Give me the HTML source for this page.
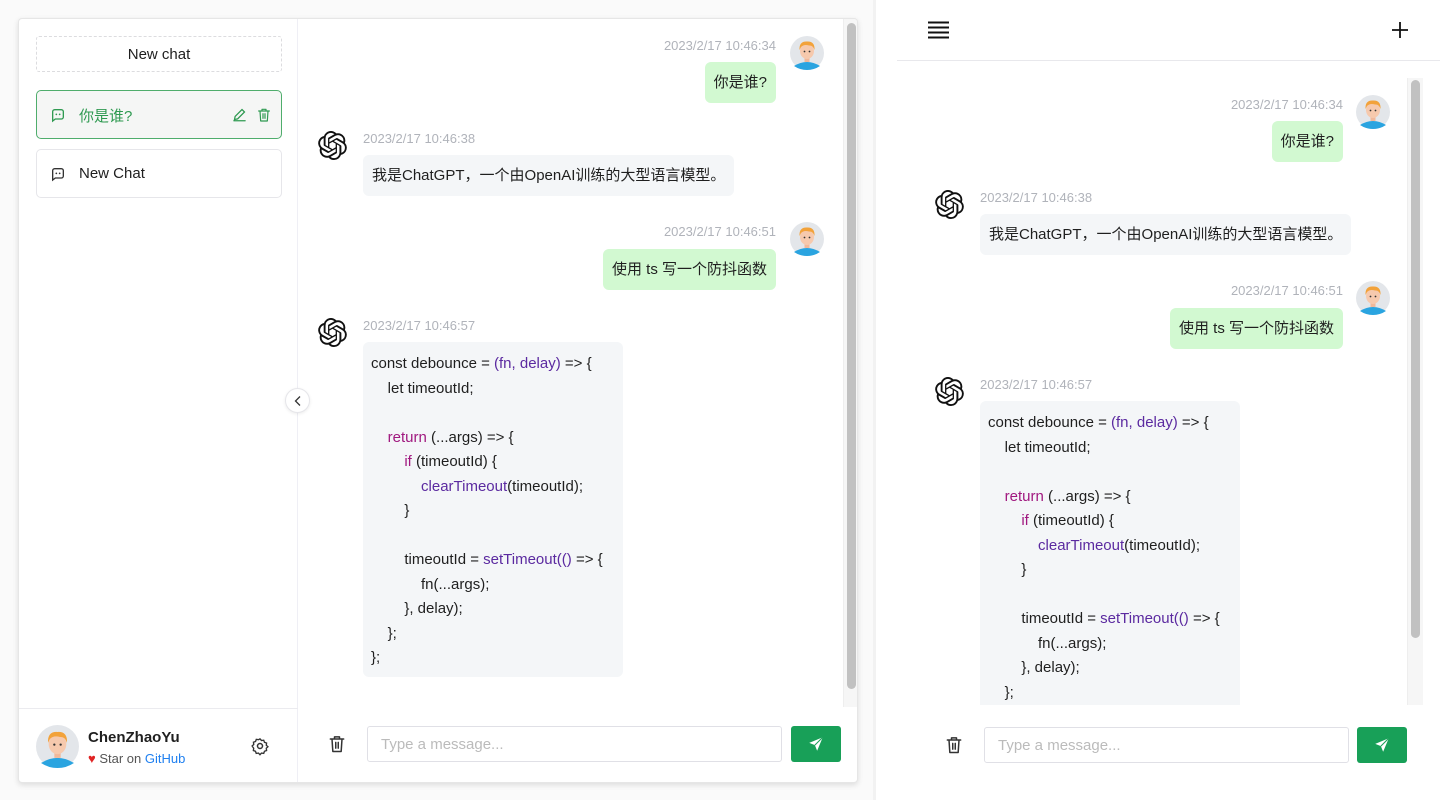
<!DOCTYPE html>
<html><head><meta charset="utf-8"><style>
*{box-sizing:border-box;margin:0;padding:0}
body{width:1440px;height:800px;overflow:hidden;background:#fafafa;font-family:"Liberation Sans","Noto Sans CJK SC",sans-serif;color:#1f1f1f;position:relative}
.abs{position:absolute}
.card{left:18px;top:18px;width:840px;height:765px;background:#fff;border:1px solid #e6e6e6;border-radius:4px;box-shadow:0 2px 6px rgba(0,0,0,.12);overflow:hidden}
.ts{font-size:13px;color:#b0b3ba;white-space:nowrap}
.bub{font-size:15px;border-radius:6px;padding:0 9px;line-height:41px;white-space:nowrap}
.u{background:#d2f9d1}
.b{background:#f4f6f8}
.code{background:#f4f6f8;border-radius:6px;padding:10px 8px;font-size:15px;line-height:24.5px;white-space:pre;overflow:hidden}
.p{color:#5b2aa0}.k{color:#a0187f}.f{color:#5b2aa0}
.btn{background:#18a058;border-radius:3px;width:50px;height:36px;display:flex;align-items:center;justify-content:center}
.inp{border:1px solid #e0e0e6;border-radius:3px;height:36px;font-size:15px;color:#bbb;padding-left:13px;line-height:36px;background:#fff}
</style></head><body>
<svg width="0" height="0" style="position:absolute">
<defs>
<symbol id="av" viewBox="0 0 34 34">
<circle cx="17" cy="17" r="17" fill="#e3e6ea"/>
<path d="M4 30 Q17 22 30 30 Q24 34 17 34 Q10 34 4 30Z" fill="#2aa4e0"/>
<rect x="14.5" y="20" width="5" height="6" fill="#f0b89a"/>
<ellipse cx="17" cy="15" rx="7" ry="8" fill="#f6c9ad"/>
<path d="M9.5 14 Q9 5 17 5.5 Q25 5 24.5 14 Q23 9 19 9.5 Q14 8 11 11Z" fill="#f2a23a"/>
<circle cx="14.5" cy="15.5" r=".9" fill="#333"/><circle cx="19.5" cy="15.5" r=".9" fill="#333"/>
</symbol>
<symbol id="oai" viewBox="0 0 24 24"><path fill="#111" d="M22.2819 9.8211a5.9847 5.9847 0 0 0-.5157-4.9108 6.0462 6.0462 0 0 0-6.5098-2.9A6.0651 6.0651 0 0 0 4.9807 4.1818a5.9847 5.9847 0 0 0-3.9977 2.9 6.0462 6.0462 0 0 0 .7427 7.0966 5.98 5.98 0 0 0 .511 4.9107 6.051 6.051 0 0 0 6.5146 2.9001A5.9847 5.9847 0 0 0 13.2599 24a6.0557 6.0557 0 0 0 5.7718-4.2058 5.9894 5.9894 0 0 0 3.9977-2.9001 6.0557 6.0557 0 0 0-.7475-7.0729zm-9.022 12.6081a4.4755 4.4755 0 0 1-2.8764-1.0408l.1419-.0804 4.7783-2.7582a.7948.7948 0 0 0 .3927-.6813v-6.7369l2.02 1.1686a.071.071 0 0 1 .038.052v5.5826a4.504 4.504 0 0 1-4.4945 4.4944zm-9.6607-4.1254a4.4708 4.4708 0 0 1-.5346-3.0137l.142.0852 4.783 2.7582a.7712.7712 0 0 0 .7806 0l5.8428-3.3685v2.3324a.0804.0804 0 0 1-.0332.0615L9.74 19.9502a4.4992 4.4992 0 0 1-6.1408-1.6464zM2.3408 7.8956a4.485 4.485 0 0 1 2.3655-1.9728V11.6a.7664.7664 0 0 0 .3879.6765l5.8144 3.3543-2.0201 1.1685a.0757.0757 0 0 1-.071 0l-4.8303-2.7865A4.504 4.504 0 0 1 2.3408 7.872zm16.5963 3.8558L13.1038 8.364 15.1192 7.2a.0757.0757 0 0 1 .071 0l4.8303 2.7913a4.4944 4.4944 0 0 1-.6765 8.1042v-5.6772a.79.79 0 0 0-.407-.667zm2.0107-3.0231l-.142-.0852-4.7735-2.7818a.7759.7759 0 0 0-.7854 0L9.409 9.2297V6.8974a.0662.0662 0 0 1 .0284-.0615l4.8303-2.7866a4.4992 4.4992 0 0 1 6.6802 4.66zM8.3065 12.863l-2.02-1.1638a.0804.0804 0 0 1-.038-.0567V6.0742a4.4992 4.4992 0 0 1 7.3757-3.4537l-.142.0805L8.704 5.459a.7948.7948 0 0 0-.3927.6813zm1.0976-2.3654l2.602-1.4998 2.6069 1.4998v2.9994l-2.5974 1.4997-2.6067-1.4997Z"/></symbol>
<symbol id="trash" viewBox="0 0 24 24"><g fill="none" stroke="currentColor" stroke-width="1.8" stroke-linecap="round" stroke-linejoin="round"><path d="M4 6h16M9 6V3.5h6V6M6 6l1 15h10l1-15M10.5 10v7M13.5 10v7"/></g></symbol>
<symbol id="send" viewBox="0 0 24 24"><path fill="#fff" d="M21 3L3 10.5l7.5 3L13.5 21z"/><path d="M10.5 13.5L21 3" stroke="#18a058" stroke-width="1.4"/></symbol>
<symbol id="chat" viewBox="0 0 24 24"><g fill="none" stroke="currentColor" stroke-width="2"><path d="M7 4h10a3 3 0 0 1 3 3v8a3 3 0 0 1-3 3H8l-4 3V7a3 3 0 0 1 3-3z"/></g><circle cx="9.5" cy="11" r="1.3" fill="currentColor"/><circle cx="14.5" cy="11" r="1.3" fill="currentColor"/></symbol>
</defs></svg>

<!-- LEFT CARD -->
<div class="abs card">
  <div class="abs" style="left:278px;top:0;width:1px;height:765px;background:#efeff5"></div>
  <div class="abs" style="left:17px;top:17px;width:246px;height:36px;border:1px dashed #dcdcdf;border-radius:3px;text-align:center;line-height:35px;font-size:15px">New chat</div>
  <div class="abs" style="left:17px;top:71px;width:246px;height:49px;border:1px solid #4fad6c;border-radius:5px;background:#f5f6f5;color:#2f9a51">
    <svg class="abs" style="left:13px;top:16px;width:16px;height:16px;color:#2f9a51"><use href="#chat"/></svg>
    <span class="abs" style="left:42px;top:14px;font-size:15px">你是谁?</span>
    <svg class="abs" style="left:195px;top:16px;width:15px;height:15px" viewBox="0 0 24 24"><g fill="none" stroke="#2f9a51" stroke-width="2" stroke-linecap="round"><path d="M4 20l1-5L16 4l4 4L9 19z M3 22h18"/></g></svg>
    <svg class="abs" style="left:219px;top:16px;width:16px;height:16px;color:#2f9a51"><use href="#trash"/></svg>
  </div>
  <div class="abs" style="left:17px;top:130px;width:246px;height:49px;border:1px solid #e6e6ea;border-radius:5px">
    <svg class="abs" style="left:13px;top:16px;width:16px;height:16px;color:#333"><use href="#chat"/></svg>
    <span class="abs" style="left:42px;top:15px;font-size:15px">New Chat</span>
  </div>
  <div class="abs" style="left:0;top:689px;width:279px;height:1px;background:#ebebef"></div>
  <svg class="abs" style="left:17px;top:706px;width:43px;height:43px"><use href="#av"/></svg>
  <div class="abs" style="left:69px;top:710px;font-size:15px;font-weight:bold">ChenZhaoYu</div>
  <div class="abs" style="left:69px;top:732px;font-size:13px;color:#555"><span style="color:#e02424">♥</span> Star on <span style="color:#2080f0">GitHub</span></div>
  <svg class="abs" style="left:231px;top:717px;width:20px;height:20px" viewBox="0 0 24 24"><g fill="none" stroke="#333" stroke-width="1.8"><path d="M12 2.5l2 2.2 3-.4 1 2.8 2.8 1-.4 3 2.2 2-2.2 2 .4 3-2.8 1-1 2.8-3-.4-2 2.2-2-2.2-3 .4-1-2.8-2.8-1 .4-3L1.5 12l2.2-2-.4-3 2.8-1 1-2.8 3 .4z" transform="scale(.9) translate(1.3 1.3)"/><circle cx="12" cy="12" r="3"/></g></svg>
  <div class="abs" style="left:266px;top:369px;width:25px;height:25px;border-radius:50%;background:#fff;border:1px solid #e6e6ea;box-shadow:0 1px 3px rgba(0,0,0,.08)"><svg class="abs" style="left:6px;top:6px;width:12px;height:12px" viewBox="0 0 12 12"><path d="M8 1.5L3.5 6 8 10.5" fill="none" stroke="#333" stroke-width="1.3"/></svg></div>
  <div class="abs" style="left:824px;top:0;width:16px;height:688px;background:#f6f6f6;border-left:1px solid #eee"></div>
  <div class="abs" style="left:828px;top:4px;width:9px;height:666px;background:#c1c1c1;border-radius:5px"></div>
</div>

<svg class="abs" style="left:790px;top:36px;width:34px;height:34px"><use href="#av"/></svg>
<div class="abs ts" style="right:664px;top:38px">2023/2/17 10:46:34</div>
<div class="abs bub u" style="right:664px;top:62px">你是谁?</div>
<svg class="abs" style="left:318px;top:131px;width:29px;height:29px"><use href="#oai"/></svg>
<div class="abs ts" style="left:363px;top:131px">2023/2/17 10:46:38</div>
<div class="abs bub b" style="left:363px;top:155px">我是ChatGPT，一个由OpenAI训练的大型语言模型。</div>
<svg class="abs" style="left:790px;top:222px;width:34px;height:34px"><use href="#av"/></svg>
<div class="abs ts" style="right:664px;top:224px">2023/2/17 10:46:51</div>
<div class="abs bub u" style="right:664px;top:249px">使用 ts 写一个防抖函数</div>
<svg class="abs" style="left:318px;top:318px;width:29px;height:29px"><use href="#oai"/></svg>
<div class="abs ts" style="left:363px;top:318px">2023/2/17 10:46:57</div>
<div class="abs code" style="left:363px;top:342px;width:260px;height:335px">const debounce = <span class="p">(fn, delay)</span> =&gt; {
    let timeoutId;

    <span class="k">return</span> (...args) =&gt; {
        <span class="k">if</span> (timeoutId) {
            <span class="f">clearTimeout</span>(timeoutId);
        }

        timeoutId = <span class="f">setTimeout</span><span class="p">(()</span> =&gt; {
            fn(...args);
        }, delay);
    };
};</div>
<svg class="abs" style="left:327px;top:734px;width:20px;height:20px;color:#333"><use href="#trash"/></svg>
<div class="abs inp" style="left:367px;top:726px;width:415px">Type a message...</div>
<div class="abs btn" style="left:791px;top:726px"><svg width="18" height="18"><use href="#send"/></svg></div>

<!-- RIGHT MOBILE -->
<div class="abs" style="left:873px;top:0;width:3px;height:800px;background:#f2f2f2"></div>
<div class="abs" style="left:876px;top:0;width:564px;height:800px;background:#fff"></div>
<svg class="abs" style="left:928px;top:20px;width:21px;height:20px" viewBox="0 0 21 20"><path d="M0 2.5h21M0 7.5h21M0 12.5h21M0 17.5h21" stroke="#111" stroke-width="2"/></svg>
<svg class="abs" style="left:1391px;top:21px;width:18px;height:18px" viewBox="0 0 18 18"><path d="M9 1v16M1 9h16" stroke="#111" stroke-width="1.8"/></svg>
<div class="abs" style="left:897px;top:60px;width:543px;height:1px;background:#e8e8ec"></div>
<div class="abs" style="left:1407px;top:78px;width:16px;height:627px;background:#f6f6f6;border-left:1px solid #eee"></div>
<div class="abs" style="left:1411px;top:80px;width:9px;height:558px;background:#c1c1c1;border-radius:5px"></div>

<div class="abs" style="left:876px;top:61px;width:530px;height:644px;overflow:hidden">
<div class="abs" style="left:-876px;top:-61px;width:1440px;height:800px">
<svg class="abs" style="left:1356px;top:95px;width:34px;height:34px"><use href="#av"/></svg>
<div class="abs ts" style="right:97px;top:97px">2023/2/17 10:46:34</div>
<div class="abs bub u" style="right:97px;top:121px">你是谁?</div>
<svg class="abs" style="left:935px;top:190px;width:29px;height:29px"><use href="#oai"/></svg>
<div class="abs ts" style="left:980px;top:190px">2023/2/17 10:46:38</div>
<div class="abs bub b" style="left:980px;top:214px">我是ChatGPT，一个由OpenAI训练的大型语言模型。</div>
<svg class="abs" style="left:1356px;top:281px;width:34px;height:34px"><use href="#av"/></svg>
<div class="abs ts" style="right:97px;top:283px">2023/2/17 10:46:51</div>
<div class="abs bub u" style="right:97px;top:308px">使用 ts 写一个防抖函数</div>
<svg class="abs" style="left:935px;top:377px;width:29px;height:29px"><use href="#oai"/></svg>
<div class="abs ts" style="left:980px;top:377px">2023/2/17 10:46:57</div>
<div class="abs code" style="left:980px;top:401px;width:260px;height:335px">const debounce = <span class="p">(fn, delay)</span> =&gt; {
    let timeoutId;

    <span class="k">return</span> (...args) =&gt; {
        <span class="k">if</span> (timeoutId) {
            <span class="f">clearTimeout</span>(timeoutId);
        }

        timeoutId = <span class="f">setTimeout</span><span class="p">(()</span> =&gt; {
            fn(...args);
        }, delay);
    };
};</div>
</div></div>
<svg class="abs" style="left:944px;top:735px;width:20px;height:20px;color:#333"><use href="#trash"/></svg>
<div class="abs inp" style="left:984px;top:727px;width:365px">Type a message...</div>
<div class="abs btn" style="left:1357px;top:727px"><svg width="18" height="18"><use href="#send"/></svg></div>
</body></html>
